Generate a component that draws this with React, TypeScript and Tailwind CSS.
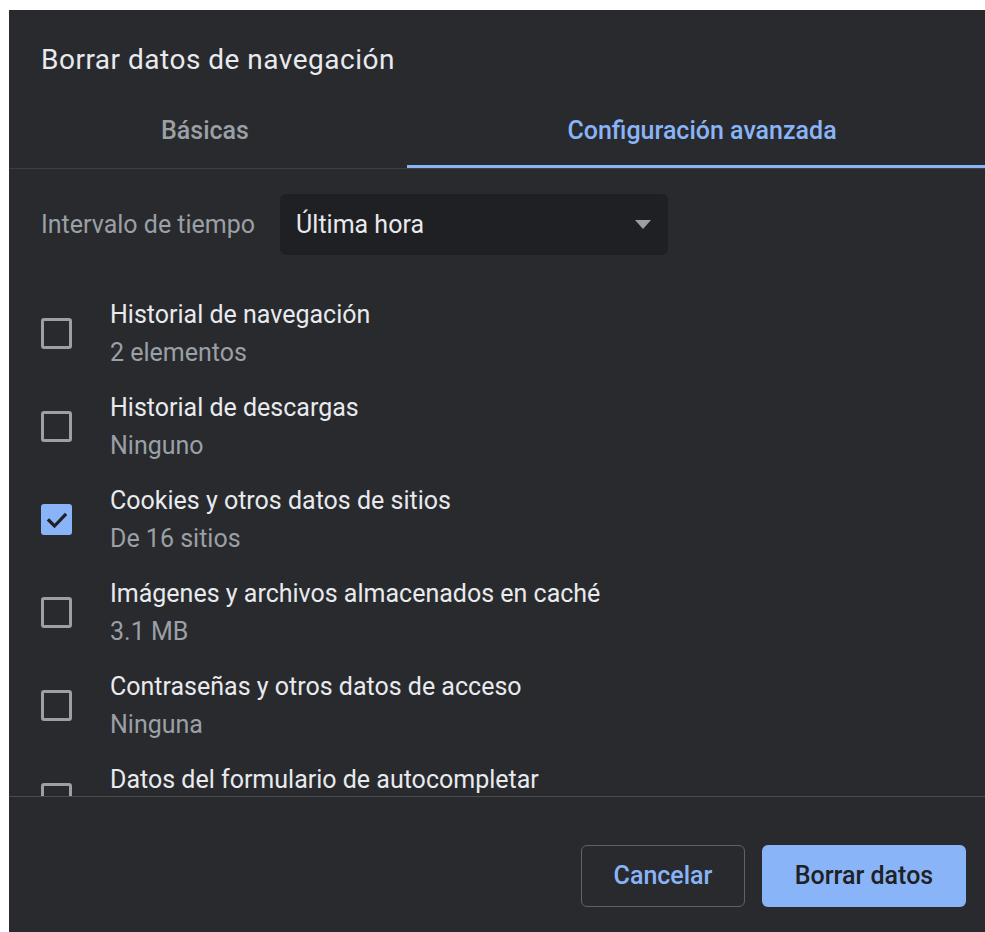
import React from 'react'

const items = [
  { title: 'Historial de navegación', sub: '2 elementos', checked: false },
  { title: 'Historial de descargas', sub: 'Ninguno', checked: false },
  { title: 'Cookies y otros datos de sitios', sub: 'De 16 sitios', checked: true },
  { title: 'Imágenes y archivos almacenados en caché', sub: '3.1 MB', checked: false },
  { title: 'Contraseñas y otros datos de acceso', sub: 'Ninguna', checked: false },
  { title: 'Datos del formulario de autocompletar', sub: '', checked: false },
]

const Checkbox = ({ checked }: { checked: boolean }) =>
  checked ? (
    <div className="w-[31px] h-[31px] rounded-[3px] bg-[#8ab4f8] flex items-center justify-center shrink-0">
      <svg width="22" height="18" viewBox="0 0 22 18" fill="none">
        <path d="M3 9.5 L8.5 15 L19 4" stroke="#202124" strokeWidth="3.2" strokeLinecap="square" />
      </svg>
    </div>
  ) : (
    <div className="w-[31px] h-[31px] rounded-[3px] border-[3px] border-[#9aa0a6] shrink-0" />
  )

const App = () => {
  return (
    <div className="w-[985px] h-[932px] bg-white pl-[9px] pt-[10px] overflow-hidden" style={{ fontFamily: 'Roboto, "Liberation Sans", sans-serif' }}>
      <div className="w-[976px] h-[922px] bg-[#292a2d] flex flex-col">
        {/* header */}
        <div className="h-[82px] pt-[32px] pl-[32px]">
          <h1 className="text-[28px] leading-[36px] tracking-[0.5px] text-[#e8eaed]">Borrar datos de navegación</h1>
        </div>

        {/* tabs */}
        <div className="flex h-[77px] border-b border-[#3c4043]">
          <div className="w-[398px] flex items-center justify-center text-[25px] font-medium text-[#9aa0a6] pt-[2px] pr-[6px]">
            Básicas
          </div>
          <div className="flex-1 relative flex items-center justify-center text-[25px] font-medium text-[#8ab4f8] pt-[2px] pl-[12px]">
            Configuración avanzada
            <div className="absolute left-0 right-0 bottom-0 h-[3px] bg-[#8ab4f8]" />
          </div>
        </div>

        {/* scrollable list */}
        <div className="h-[628px] overflow-hidden border-b border-[#4a4c50] pt-[25px]">
          <div className="flex items-center pl-[32px] gap-[25px]">
            <span className="text-[25px] text-[#9aa0a6]">Intervalo de tiempo</span>
            <div className="w-[388px] h-[61px] rounded-[6px] bg-[#1f2023] flex items-center justify-between pl-[16px] pr-[17px]">
              <span className="text-[25px] text-[#e8eaed]">Última hora</span>
              <svg width="16" height="9" viewBox="0 0 16 9">
                <path d="M0 0 H16 L8 9 Z" fill="#9aa0a6" />
              </svg>
            </div>
          </div>

          <div className="mt-[32px] flex flex-col">
            {items.map((it) => (
              <div key={it.title} className="h-[93px] flex items-center pl-[32px] gap-[38px]">
                <Checkbox checked={it.checked} />
                <div className="flex flex-col">
                  <span className="text-[25px] leading-[38px] text-[#e8eaed]">{it.title}</span>
                  <span className="text-[25px] leading-[38px] text-[#9aa0a6]">{it.sub || '\u00a0'}</span>
                </div>
              </div>
            ))}
          </div>
        </div>

        {/* footer */}
        <div className="flex justify-end gap-[17px] pt-[48px] pr-[19px]">
          <button className="w-[164px] h-[62px] rounded-[6px] border border-[#5f6368] text-[25px] font-medium text-[#8ab4f8]">
            Cancelar
          </button>
          <button className="w-[204px] h-[62px] rounded-[6px] bg-[#8ab4f8] text-[25px] font-medium text-[#202124]">
            Borrar datos
          </button>
        </div>
      </div>
    </div>
  )
}

export default App
